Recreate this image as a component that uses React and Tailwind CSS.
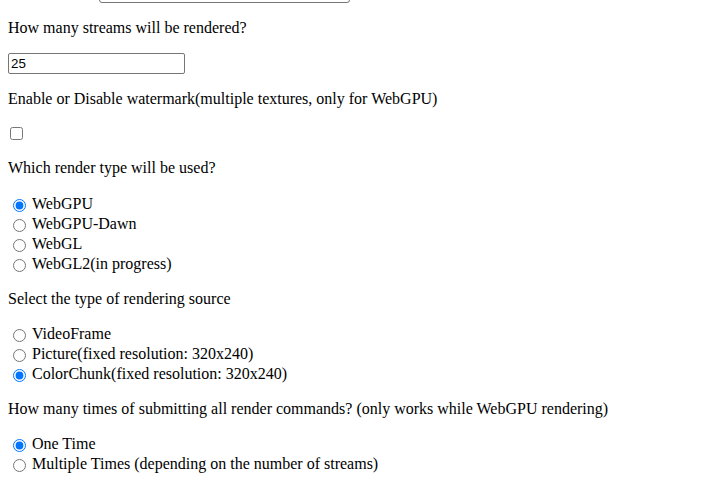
import React from "react";

function Radio({ name, label, checked }) {
  return (
    <label className="flex items-center h-[20px]">
      <input
        type="radio"
        name={name}
        defaultChecked={checked}
        className="ml-[5px] mr-[3px] mt-[3px] w-[13px] h-[13px] accent-[#0075ff]"
      />
      <span className="ml-[3px]">{label}</span>
    </label>
  );
}

export default function App() {
  const renderTypes = ["WebGPU", "WebGPU-Dawn", "WebGL", "WebGL2(in progress)"];
  const sources = [
    "VideoFrame",
    "Picture(fixed resolution: 320x240)",
    "ColorChunk(fixed resolution: 320x240)",
  ];

  return (
    <div className="min-h-screen bg-white text-black px-2 pt-px overflow-hidden font-['Liberation_Serif',serif] text-[16px] leading-[18px]">
      {/* select cut off above the viewport */}
      <div className="ml-[91px] w-[251px] h-[20px] -mt-[18px] border border-[#767676] rounded-[3px]" />

      <p className="mt-4">How many streams will be rendered?</p>
      <div className="mt-4">
        <input
          type="text"
          defaultValue="25"
          className="w-[177px] h-[21px] border border-[#767676] rounded-[2px] px-[2px] font-['Liberation_Sans',Arial,sans-serif] text-[13.33px] text-black outline-none"
        />
      </div>

      <p className="mt-4">Enable or Disable watermark(multiple textures, only for WebGPU)</p>
      <div className="mt-4 h-[19px] flex items-start">
        <input type="checkbox" className="ml-[2px] mt-[3px] w-[13px] h-[13px]" />
      </div>

      <p className="mt-4">Which render type will be used?</p>
      <div className="mt-[17px]">
        {renderTypes.map((t, i) => (
          <Radio key={t} name="renderType" label={t} checked={i === 0} />
        ))}
      </div>

      <p className="mt-4">Select the type of rendering source</p>
      <div className="mt-4">
        {sources.map((s, i) => (
          <Radio key={s} name="source" label={s} checked={i === 2} />
        ))}
      </div>

      <p className="mt-4">
        How many times of submitting all render commands? (only works while WebGPU rendering)
      </p>
      <div className="mt-4">
        <Radio name="submit" label="One Time" checked />
        <Radio name="submit" label="Multiple Times (depending on the number of streams)" />
      </div>
    </div>
  );
}
